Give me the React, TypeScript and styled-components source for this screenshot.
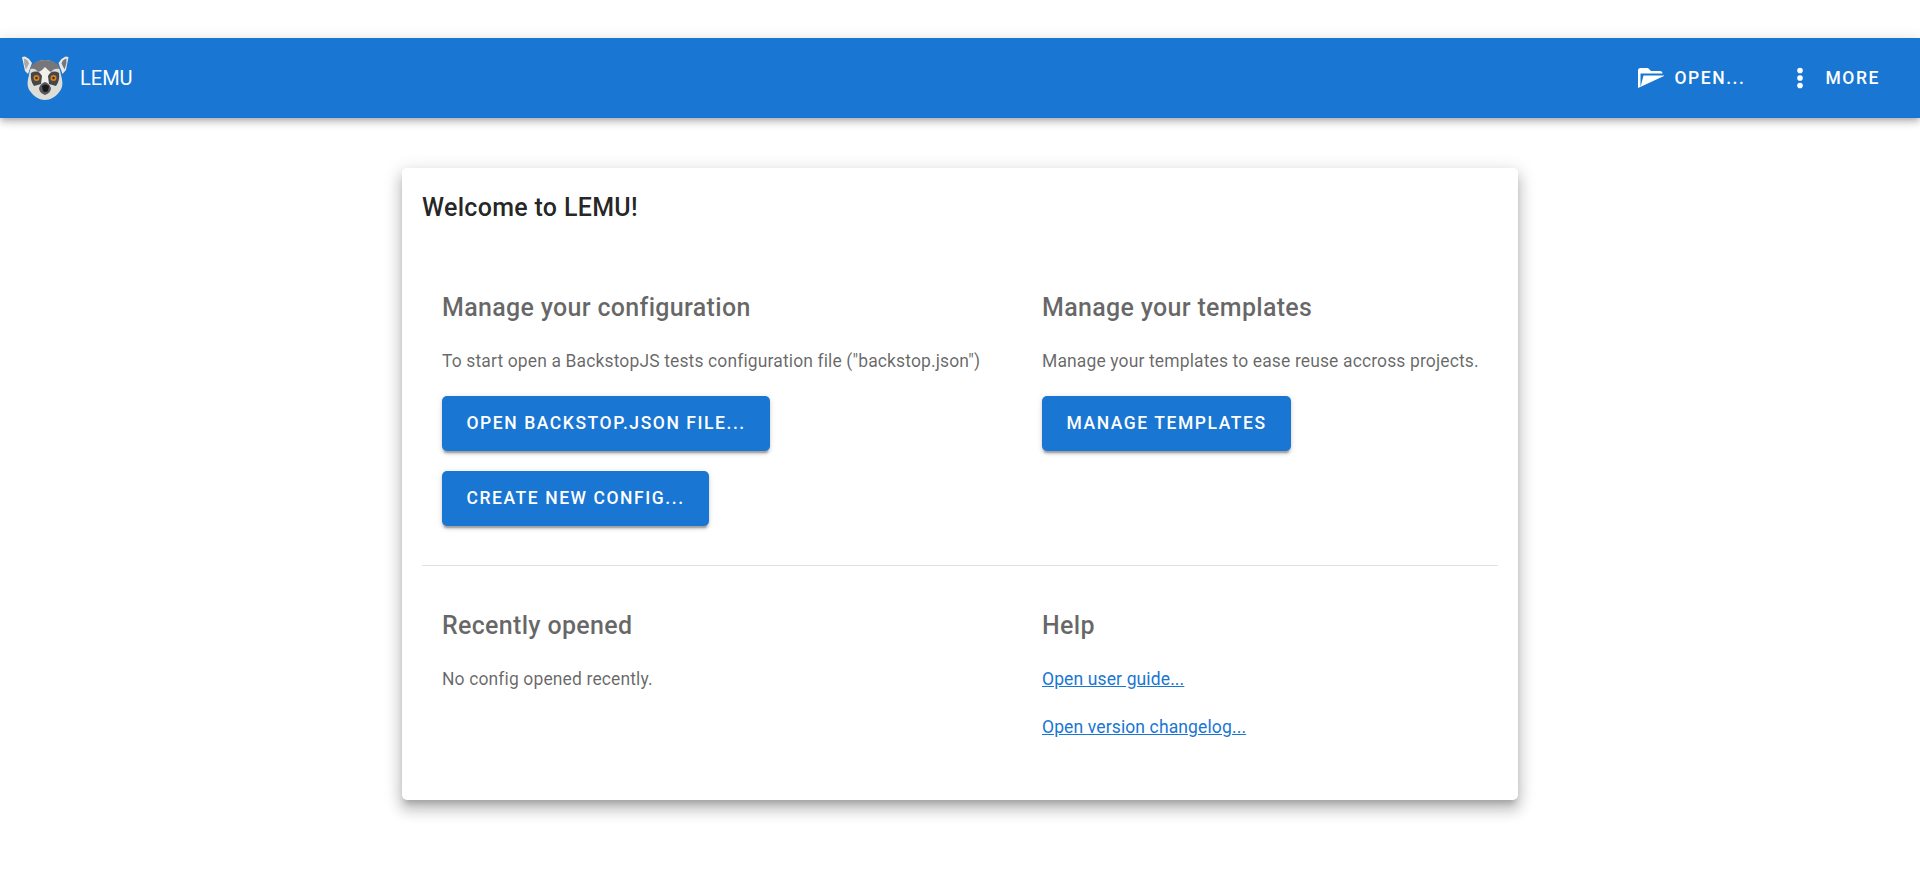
import React from "react";
import styled, { createGlobalStyle } from "styled-components";

const GlobalStyle = createGlobalStyle`
  *, *::before, *::after { box-sizing: border-box; }
  body { margin: 0; background: #fff; font-family: Roboto, sans-serif; }
`;

const Page = styled.div`
  min-height: 887px;
  padding-top: 38px;
  overflow: hidden;
`;

const AppBar = styled.header`
  display: flex;
  align-items: center;
  justify-content: space-between;
  height: 80px;
  padding: 0 20px;
  background: #1976d2;
  color: #fff;
  box-shadow: 0 2.5px 5px -1.25px rgba(0, 0, 0, 0.2), 0 5px 6.25px rgba(0, 0, 0, 0.14),
    0 1.25px 12.5px rgba(0, 0, 0, 0.12);
`;

const Brand = styled.div`
  display: flex;
  align-items: center;
  gap: 10px;
  font-size: 20px;
`;

const Actions = styled.nav`
  display: flex;
  align-items: center;
`;

const ToolbarButton = styled.button<{ $gap: number }>`
  display: flex;
  align-items: center;
  gap: ${(p) => p.$gap}px;
  height: 45px;
  padding: 0 20px;
  border: 0;
  background: none;
  color: inherit;
  font: 500 17.5px Roboto, sans-serif;
  letter-spacing: 1.5625px;
  text-transform: uppercase;
`;

const Card = styled.main`
  width: 1116px;
  height: 632px;
  margin: 50px auto 0;
  padding: 20px;
  border-radius: 5px;
  background: #fff;
  box-shadow: 0 6.25px 6.25px -3.75px rgba(0, 0, 0, 0.2), 0 10px 12.5px 1.25px rgba(0, 0, 0, 0.14),
    0 3.75px 17.5px 2.5px rgba(0, 0, 0, 0.12);
`;

const Title = styled.h1`
  margin: 0;
  font-size: 25px;
  font-weight: 500;
  line-height: 40px;
  letter-spacing: 0.3125px;
  color: rgba(0, 0, 0, 0.87);
`;

const Row = styled.section<{ $top: number; $height: number }>`
  display: grid;
  grid-template-columns: 600px 1fr;
  height: ${(p) => p.$height}px;
  padding: ${(p) => p.$top}px 20px 0;
`;

const Divider = styled.hr`
  height: 1px;
  margin: 0;
  border: 0;
  background: rgba(0, 0, 0, 0.12);
`;

const Column = styled.div`
  display: flex;
  flex-direction: column;
  align-items: flex-start;
`;

const Heading = styled.h2`
  margin: 0 0 20px;
  font-size: 25px;
  font-weight: 500;
  line-height: 40px;
  letter-spacing: 0.3125px;
  color: rgba(0, 0, 0, 0.6);
`;

const Text = styled.p`
  margin: 0 0 20px;
  font-size: 17.5px;
  line-height: 27.5px;
  letter-spacing: 0.125px;
  white-space: nowrap;
  color: rgba(0, 0, 0, 0.6);
`;

const Link = styled.a`
  color: #1976d2;
  text-decoration: underline;
`;

const Button = styled.button`
  height: 55px;
  margin-bottom: 20px;
  padding: 0 24.5px;
  border: 0;
  border-radius: 5px;
  background: #1976d2;
  color: #fff;
  font: 500 17.5px Roboto, sans-serif;
  letter-spacing: 1.5625px;
  text-transform: uppercase;
  white-space: nowrap;
  box-shadow: 0 3.75px 1.25px -2.5px rgba(0, 0, 0, 0.2), 0 2.5px 2.5px rgba(0, 0, 0, 0.14),
    0 1.25px 6.25px rgba(0, 0, 0, 0.12);
`;

const LemurLogo = () => (
  <svg width="50" height="50" viewBox="20 54 50 50" aria-hidden="true">
    <path d="M22 58l3-0.500 4 2.500 3 4-4 11-3-3z" fill="#e9e9e7" />
    <path d="M68.500 58l-3-0.500-4 2.500-3 4 4 11 3.500-4z" fill="#e9e9e7" />
    <path d="M24 59.500q4 1 5 5l-3 6q-2.500-5-2-11z" fill="#a9a8a6" />
    <path d="M66.500 59.500q-4 1-5 5l3 6q2.500-5 2-11z" fill="#77767a" />
    <path d="M45 61c9 0 15 6 16 15 2 7 2 12-1 16-4 6-10 9-15 9s-11-3-15-9c-3-4-3-9-1-16 1-9 7-15 16-15z" fill="#deded9" />
    <path d="M30 70c2-6 8-9 15-9s14 3 15 9c-4-1-7 0-9 3l-6-3-7 3c-2-3-4-4-8-3z" fill="#77777a" />
    <path d="M45 68l5 5-1 15h-8l-1-15z" fill="#f1f0ed" />
    <path d="M31 74q7-4 11 3l-1 8-7 2q-4-5-3-13zM59 74q-7-4-11 3l1 8 7 2q4-5 3-13z" fill="#47474a" />
    <circle cx="36.500" cy="79" r="3" fill="#d58221" />
    <circle cx="53.500" cy="79" r="3" fill="#d58221" />
    <circle cx="36.500" cy="79" r="1.200" fill="#402713" />
    <circle cx="53.500" cy="79" r="1.200" fill="#402713" />
    <path d="M45 83q4 1 6 6 0 5-6 7-6-2-6-7 2-5 6-6z" fill="#57575a" />
    <path d="M42 87q3-3 7 0l-1 5q-3 2-5 0z" fill="#18191b" />
  </svg>
);

const FolderIcon = () => (
  <svg width="30" height="30" viewBox="0 0 30 30" fill="#fff" aria-hidden="true">
    <path d="M4 25V7.500Q4 5 6.500 5H14l3 3h9q2.500 0 2.500 2.500H6.500V24L9.500 12.500H31" />
  </svg>
);

const DotsIcon = () => (
  <svg width="30" height="30" viewBox="0 0 24 24" fill="#fff" aria-hidden="true">
    <circle cx="12" cy="6" r="2.250" />
    <circle cx="12" cy="12" r="2.250" />
    <circle cx="12" cy="18" r="2.250" />
  </svg>
);

export default function App() {
  return (
    <>
      <GlobalStyle />
      <Page>
        <AppBar>
          <Brand>
            <LemurLogo />
            <span>LEMU</span>
          </Brand>
          <Actions>
            <ToolbarButton $gap={10}>
              <FolderIcon />
              <span>Open...</span>
            </ToolbarButton>
            <ToolbarButton $gap={10}>
              <DotsIcon />
              <span>More</span>
            </ToolbarButton>
          </Actions>
        </AppBar>
        <Card>
          <Title>Welcome to LEMU!</Title>
          <Row $top={60} $height={337}>
            <Column>
              <Heading>Manage your configuration</Heading>
              <Text>To start open a BackstopJS tests configuration file ("backstop.json")</Text>
              <Button>Open backstop.json file...</Button>
              <Button>Create new config...</Button>
            </Column>
            <Column>
              <Heading>Manage your templates</Heading>
              <Text>Manage your templates to ease reuse accross projects.</Text>
              <Button>Manage templates</Button>
            </Column>
          </Row>
          <Divider />
          <Row $top={40} $height={214}>
            <Column>
              <Heading>Recently opened</Heading>
              <Text>No config opened recently.</Text>
            </Column>
            <Column>
              <Heading>Help</Heading>
              <Text>
                <Link>Open user guide...</Link>
              </Text>
              <Text>
                <Link>Open version changelog...</Link>
              </Text>
            </Column>
          </Row>
        </Card>
      </Page>
    </>
  );
}
